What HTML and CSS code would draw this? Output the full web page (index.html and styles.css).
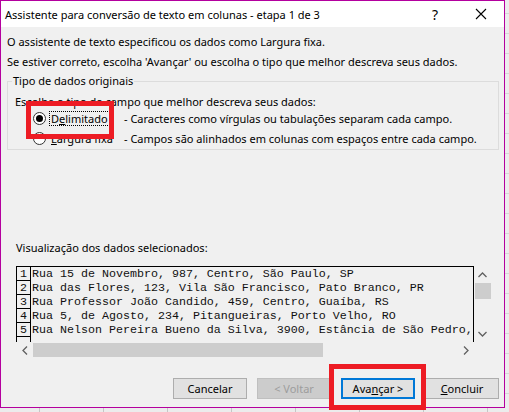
FILE: index.html
```html
<!DOCTYPE html>
<html lang="pt-BR">
<head>
    <meta charset="UTF-8">
    <meta name="viewport" content="width=device-width, initial-scale=1.0">
    <title>Assistente para conversão de texto em colunas</title>
    <link rel="stylesheet" href="styles.css">
</head>
<body>
    <div class="dialog">
        <!-- Title bar -->
        <div class="titlebar">
            <span class="title">Assistente para conversão de texto em colunas - etapa 1 de 3</span>
            <span class="cap-btn help">?</span>
            <span class="cap-btn close">
                <svg width="12" height="12" viewBox="0 0 12 12"><path d="M1 1 L11 11 M11 1 L1 11" stroke="#000" stroke-width="1.1" fill="none"/></svg>
            </span>
        </div>

        <!-- Content -->
        <div class="content">
            <p class="intro first">O assistente de texto especificou os dados como Largura fixa.</p>
            <p class="intro">Se estiver correto, escolha 'Avançar' ou escolha o tipo que melhor descreva seus dados.</p>

            <fieldset class="group">
                <legend>Tipo de dados originais</legend>
                <div class="group-inner">
                    <p class="choose">Escolha o tipo de campo que melhor descreva seus dados:</p>
                    <div class="option">
                        <span class="radio checked"></span>
                        <span class="opt-label"><span class="focus">D<u>e</u>limitado</span></span>
                        <span class="opt-desc">- Caracteres como vírgulas ou tabulações separam cada campo.</span>
                    </div>
                    <div class="option second">
                        <span class="radio"></span>
                        <span class="opt-label"><span class="plain"><u>L</u>argura fixa</span></span>
                        <span class="opt-desc">- Campos são alinhados em colunas com espaços entre cada campo.</span>
                    </div>
                </div>
            </fieldset>

            <p class="preview-label">Visualização dos dados selecionados:</p>

            <div class="preview">
                <div class="view">
                    <div class="row"><span class="ln">1</span><span class="txt">Rua 15 de Novembro, 987, Centro, São Paulo, SP</span></div>
                    <div class="row"><span class="ln">2</span><span class="txt">Rua das Flores, 123, Vila São Francisco, Pato Branco, PR</span></div>
                    <div class="row"><span class="ln">3</span><span class="txt">Rua Professor João Candido, 459, Centro, Guaíba, RS</span></div>
                    <div class="row"><span class="ln">4</span><span class="txt">Rua 5, de Agosto, 234, Pitangueiras, Porto Velho, RO</span></div>
                    <div class="row"><span class="ln">5</span><span class="txt">Rua Nelson Pereira Bueno da Silva, 3900, Estância de São Pedro,</span></div>
                    <div class="row"><span class="ln"></span></div>
                </div>
                <div class="vscroll">
                    <span class="arrow">
                        <svg width="9" height="6" viewBox="0 0 9 6"><path d="M0.5 5 L4.5 1 L8.5 5" stroke="#606060" stroke-width="1.3" fill="none"/></svg>
                    </span>
                    <span class="vthumb"></span>
                    <span class="vspace"></span>
                    <span class="arrow">
                        <svg width="9" height="6" viewBox="0 0 9 6"><path d="M0.5 1 L4.5 5 L8.5 1" stroke="#606060" stroke-width="1.3" fill="none"/></svg>
                    </span>
                </div>
                <div class="hscroll">
                    <span class="arrow">
                        <svg width="6" height="9" viewBox="0 0 6 9"><path d="M5 0.5 L1 4.5 L5 8.5" stroke="#606060" stroke-width="1.3" fill="none"/></svg>
                    </span>
                    <span class="hthumb"></span>
                    <span class="hspace"></span>
                    <span class="arrow">
                        <svg width="6" height="9" viewBox="0 0 6 9"><path d="M1 0.5 L5 4.5 L1 8.5" stroke="#606060" stroke-width="1.3" fill="none"/></svg>
                    </span>
                </div>
            </div>

            <!-- Buttons -->
            <div class="buttons">
                <button class="btn">Cancelar</button>
                <button class="btn disabled">&lt; Voltar</button>
                <button class="btn default">Ava<u>n</u>çar &gt;</button>
                <button class="btn"><u>C</u>oncluir</button>
            </div>
        </div>

        <!-- Red annotation boxes -->
        <div class="mark mark-option"></div>
        <div class="mark mark-next"></div>
    </div>
</body>
</html>
```

FILE: styles.css
```css
* {
    box-sizing: border-box;
}

html, body {
    margin: 0;
    padding: 0;
}

body {
    width: 509px;
    height: 412px;
    overflow: hidden;
    background-color: #ececec;
    background-image:
        linear-gradient(90deg, #c6c6c6 1px, transparent 1px),
        linear-gradient(#d6d6d6 1px, transparent 1px);
    background-size: 64px 100%, 100% 20px;
    background-position: 39px 0, 0 13px;
}

.dialog {
    position: relative;
    width: 505px;
    height: 408px;
    border: 1px solid #b4009e;
    background-color: #f0f0f0;
    font-family: 'Noto Sans', sans-serif;
    font-size: 11px;
    color: #000;
    display: flex;
    flex-direction: column;
}

.titlebar {
    height: 26px;
    background-color: #fff;
    display: flex;
    align-items: center;
}

.title {
    flex: 1;
    padding-left: 4px;
    white-space: nowrap;
}

.cap-btn {
    width: 46px;
    height: 26px;
    display: flex;
    align-items: center;
    justify-content: center;
}

.help {
    font-size: 14px;
}

.content {
    flex: 1;
    display: flex;
    flex-direction: column;
}

.intro {
    margin: 4px 0 0;
    padding-left: 6px;
    line-height: 16px;
    white-space: nowrap;
}

.intro.first {
    margin-top: 7px;
}

.group {
    margin: 3px 5px 0 6px;
    padding: 0;
    border: 1px solid #dcdcdc;
    min-width: 0;
}

.group legend {
    margin-left: 4px;
    padding: 0 1px;
    line-height: 16px;
}

.group-inner {
    padding: 5px 7px 3px;
}

.choose {
    margin: 0;
    line-height: 16px;
}

.option {
    display: flex;
    align-items: center;
    height: 16px;
    white-space: nowrap;
}

.option.second {
    margin-top: 4px;
}

.radio {
    flex-shrink: 0;
    width: 13px;
    height: 13px;
    margin-left: 18px;
    border: 1px solid #333;
    border-radius: 50%;
    background-color: #fff;
    display: flex;
    align-items: center;
    justify-content: center;
}

.radio.checked::after {
    content: '';
    width: 7px;
    height: 7px;
    border-radius: 50%;
    background-color: #000;
}

.opt-label {
    flex-shrink: 0;
    width: 73px;
    margin-left: 5px;
}

.focus, .plain {
    display: inline-block;
    line-height: 13px;
    padding: 0 1px;
    margin-left: -2px;
    border: 1px dotted transparent;
}

.focus {
    border-color: #000;
}

.preview-label {
    margin: 90px 0 0;
    padding-left: 15px;
    line-height: 16px;
}

.preview {
    margin: 10px 0 0 15px;
    display: grid;
    grid-template-columns: 458px 17px;
    grid-template-rows: 76px 16px;
}

.view {
    border: 1px solid #000;
    border-bottom: none;
    overflow: hidden;
    font-family: 'Liberation Mono', monospace;
    font-size: 11.67px;
    color: #111;
}

.row {
    display: flex;
    height: 14px;
}

.ln {
    width: 14px;
    height: 14px;
    flex-shrink: 0;
    border-right: 1px solid #000;
    border-bottom: 1px solid #000;
    text-align: center;
    line-height: 14px;
}

.txt {
    padding-left: 1px;
    line-height: 15px;
    white-space: pre;
}

.vscroll {
    display: flex;
    flex-direction: column;
}

.vscroll .arrow {
    height: 17px;
    display: flex;
    align-items: center;
    justify-content: center;
}

.vthumb {
    height: 16px;
    margin-left: 1px;
    background-color: #cdcdcd;
}

.vspace {
    flex: 1;
}

.hscroll {
    display: flex;
}

.hscroll .arrow {
    width: 17px;
    display: flex;
    align-items: center;
    justify-content: center;
}

.hthumb {
    width: 290px;
    margin: 1px 0;
    background-color: #cdcdcd;
}

.hspace {
    flex: 1;
}

.buttons {
    margin-top: 20px;
    padding-left: 172px;
    display: flex;
    gap: 10px;
}

.btn {
    width: 74px;
    height: 21px;
    padding: 0;
    font-family: 'Noto Sans', sans-serif;
    font-size: 11px;
    color: #000;
    background-color: #e1e1e1;
    border: 1px solid #adadad;
}

.btn.disabled {
    background-color: #cccccc;
    border-color: #bfbfbf;
    color: #9d9d9d;
}

.btn.default {
    border-color: #0078d7;
    box-shadow: inset 0 0 0 1px #0078d7;
}

.mark {
    position: absolute;
    border: 5px solid #ed1c24;
}

.mark-option {
    left: 25px;
    top: 100px;
    width: 88px;
    height: 38px;
}

.mark-next {
    left: 328px;
    top: 363px;
    width: 97px;
    height: 46px;
}
```
